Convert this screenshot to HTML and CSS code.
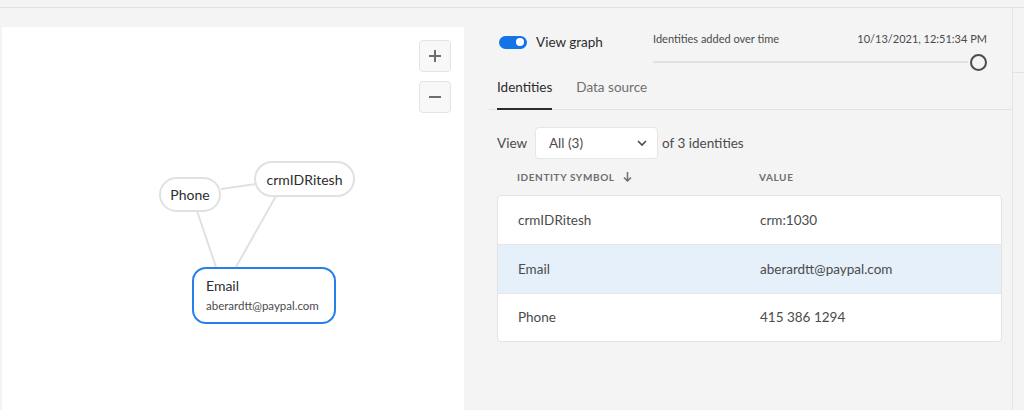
FILE: index.html
```html
<!DOCTYPE html>
<html>
<head>
<meta charset="utf-8">
<link rel="stylesheet" href="styles.css">
</head>
<body>
<div class="topbar"></div>
<div class="main">
  <div class="graph">
    <div class="zoom">
      <button class="zbtn"><svg width="14" height="14" viewBox="0 0 14 14"><path d="M7 1v12M1 7h12" stroke="#6e6e6e" stroke-width="2"/></svg></button>
      <button class="zbtn"><svg width="14" height="14" viewBox="0 0 14 14"><path d="M1 7h12" stroke="#6e6e6e" stroke-width="2"/></svg></button>
    </div>
    <svg class="edges" width="462" height="383" viewBox="0 0 462 383">
      <line x1="219" y1="162" x2="254" y2="157" stroke="#e1e1e1" stroke-width="2"/>
      <line x1="195" y1="184" x2="214" y2="240" stroke="#e1e1e1" stroke-width="2"/>
      <line x1="274" y1="169" x2="234" y2="240" stroke="#e1e1e1" stroke-width="2"/>
    </svg>
    <div class="node n-phone">Phone</div>
    <div class="node n-crm">crmIDRitesh</div>
    <div class="node n-email">
      <div class="n-title">Email</div>
      <div class="n-sub">aberardtt@paypal.com</div>
    </div>
  </div>
  <div class="right">
    <div class="head">
      <div class="toggle-wrap">
        <span class="toggle"><span class="knob"></span></span>
        <span class="toggle-label">View graph</span>
      </div>
      <div class="timeline">
        <div class="tl-labels"><span>Identities added over time</span><span>10/13/2021, 12:51:34 PM</span></div>
        <div class="tl-track"><span class="track"></span><span class="handle"></span></div>
      </div>
    </div>
    <div class="tabs">
      <div class="tab active">Identities</div>
      <div class="tab">Data source</div>
    </div>
    <div class="content">
      <div class="view-row">
        <span class="view-label">View</span>
        <div class="select"><span>All (3)</span><svg width="10" height="7" viewBox="0 0 10 7"><path d="M1 1l4 4 4-4" fill="none" stroke="#4b4b4b" stroke-width="1.6"/></svg></div>
        <span class="count">of 3 identities</span>
      </div>
      <div class="thead">
        <div class="col1">IDENTITY SYMBOL <svg width="9" height="10" viewBox="0 0 9 10"><path d="M4.5 0v9M1 5.5l3.5 3.5 3.5-3.5" fill="none" stroke="#6e6e6e" stroke-width="1.5"/></svg></div>
        <div class="col2">VALUE</div>
      </div>
      <div class="table">
        <div class="row"><div class="col1">crmIDRitesh</div><div class="col2">crm:1030</div></div>
        <div class="row sel"><div class="col1">Email</div><div class="col2">aberardtt@paypal.com</div></div>
        <div class="row"><div class="col1">Phone</div><div class="col2">415 386 1294</div></div>
      </div>
    </div>
  </div>
  <div class="edge-col"><div class="edge-top"></div></div>
</div>
</body>
</html>
```
FILE: styles.css
```css
* { box-sizing: border-box; }
html, body { margin: 0; height: 100%; }
body {
  background: #f4f4f4;
  font-family: Lato, "Open Sans", sans-serif;
  color: #2c2c2c;
  overflow: hidden;
}
.topbar { height: 8px; border-bottom: 1px solid #e3e3e3; background: #f4f4f4; }
.main { display: flex; height: 402px; }
.graph {
  position: relative;
  flex-shrink: 0;
  width: 462px;
  margin: 19px 0 0 2px;
  background: #fff;
}
.zoom {
  position: absolute;
  left: 417px; top: 13px;
  display: flex; flex-direction: column; gap: 9px;
}
.zbtn {
  width: 32px; height: 32px;
  border: 1px solid #e4e4e4; border-radius: 4px;
  background: #f8f8f8;
  display: flex; align-items: center; justify-content: center;
  padding: 0;
}
.edges { position: absolute; left: 0; top: 0; }
.node {
  position: absolute;
  background: #fff;
  border: 2px solid #e1e1e1;
  border-radius: 18px;
  font-size: 14px;
  color: #2c2c2c;
  display: flex; align-items: center; justify-content: center;
}
.n-phone { left: 157px; top: 150px; width: 62px; height: 35px; }
.n-crm { left: 252px; top: 134px; width: 101px; height: 36px; }
.n-email {
  left: 190px; top: 240px; width: 144px; height: 57px;
  border-color: #2680eb;
  border-radius: 14px;
  flex-direction: column; align-items: flex-start; justify-content: center;
  padding-left: 12px;
}
.n-title { font-size: 14px; line-height: 20px; }
.n-sub { font-size: 11.5px; color: #4b4b4b; line-height: 20px; }

.right { flex: 1; min-width: 0; padding-left: 25px; display: flex; flex-direction: column; }
.head { display: flex; height: 65px; padding: 26px 0 0 10px; }
.toggle-wrap { display: flex; align-items: center; height: 16px; gap: 9px; width: 154px; }
.toggle {
  width: 28px; height: 13px; border-radius: 7px; background: #1473e6;
  position: relative; display: inline-block;
}
.knob {
  position: absolute; right: 3px; top: 2.5px;
  width: 8px; height: 8px; border-radius: 50%; background: #fff;
}
.toggle-label { font-size: 13.5px; color: #2c2c2c; }
.timeline { width: 334px; margin-top: -2px; }
.tl-labels { display: flex; justify-content: space-between; font-size: 11px; color: #4b4b4b; height: 16px; }
.tl-track { position: relative; height: 20px; display: flex; align-items: center; margin-top: 4px; }
.track { height: 2px; background: #e1e1e1; width: 315px; }
.handle {
  width: 17px; height: 17px; border-radius: 50%;
  border: 2px solid #4b4b4b; background: #f4f4f4;
  margin-left: 2px;
}
.tabs {
  display: flex; gap: 24px;
  height: 37px;
  padding-left: 8px;
  border-bottom: 1px solid #e3e3e3;
}
.tab {
  font-size: 13.5px; color: #6e6e6e;
  display: flex; align-items: center;
  padding-bottom: 7px;
  border-bottom: 2px solid transparent;
  margin-bottom: -1px;
}
.tab.active { color: #2c2c2c; border-bottom-color: #2c2c2c; }
.content { padding: 17px 0 0 8px; }
.view-row { display: flex; align-items: center; height: 32px; }
.view-label { font-size: 13.5px; color: #4b4b4b; width: 38px; }
.select {
  width: 123px; height: 32px;
  background: #fff; border: 1px solid #e6e6e6; border-radius: 4px;
  display: flex; align-items: center; justify-content: space-between;
  padding: 0 10px 0 13px;
  font-size: 13.5px; color: #4b4b4b;
}
.count { font-size: 13.5px; color: #4b4b4b; margin-left: 4px; }
.thead {
  display: flex; height: 36px; align-items: center;
  font-size: 10px; font-weight: 700; letter-spacing: 0.6px; color: #6e6e6e;
}
.col1 { width: 262px; padding-left: 20px; display: flex; align-items: center; gap: 8px; }
.table {
  background: #fff; border: 1px solid #e3e3e3; border-radius: 4px;
  width: 505px; overflow: hidden;
}
.row {
  display: flex; align-items: center; height: 48.5px;
  font-size: 13.5px; color: #4b4b4b;
  border-top: 1px solid #e6e6e6;
}
.row:first-child { border-top: 0; height: 48px; }
.row.sel { background: #e5f0fb; }
.edge-col { width: 12px; flex-shrink: 0; border-left: 1px solid #e3e3e3; margin-top: -1px; }
.edge-top { height: 66px; border-bottom: 1px solid #e3e3e3; }
```
